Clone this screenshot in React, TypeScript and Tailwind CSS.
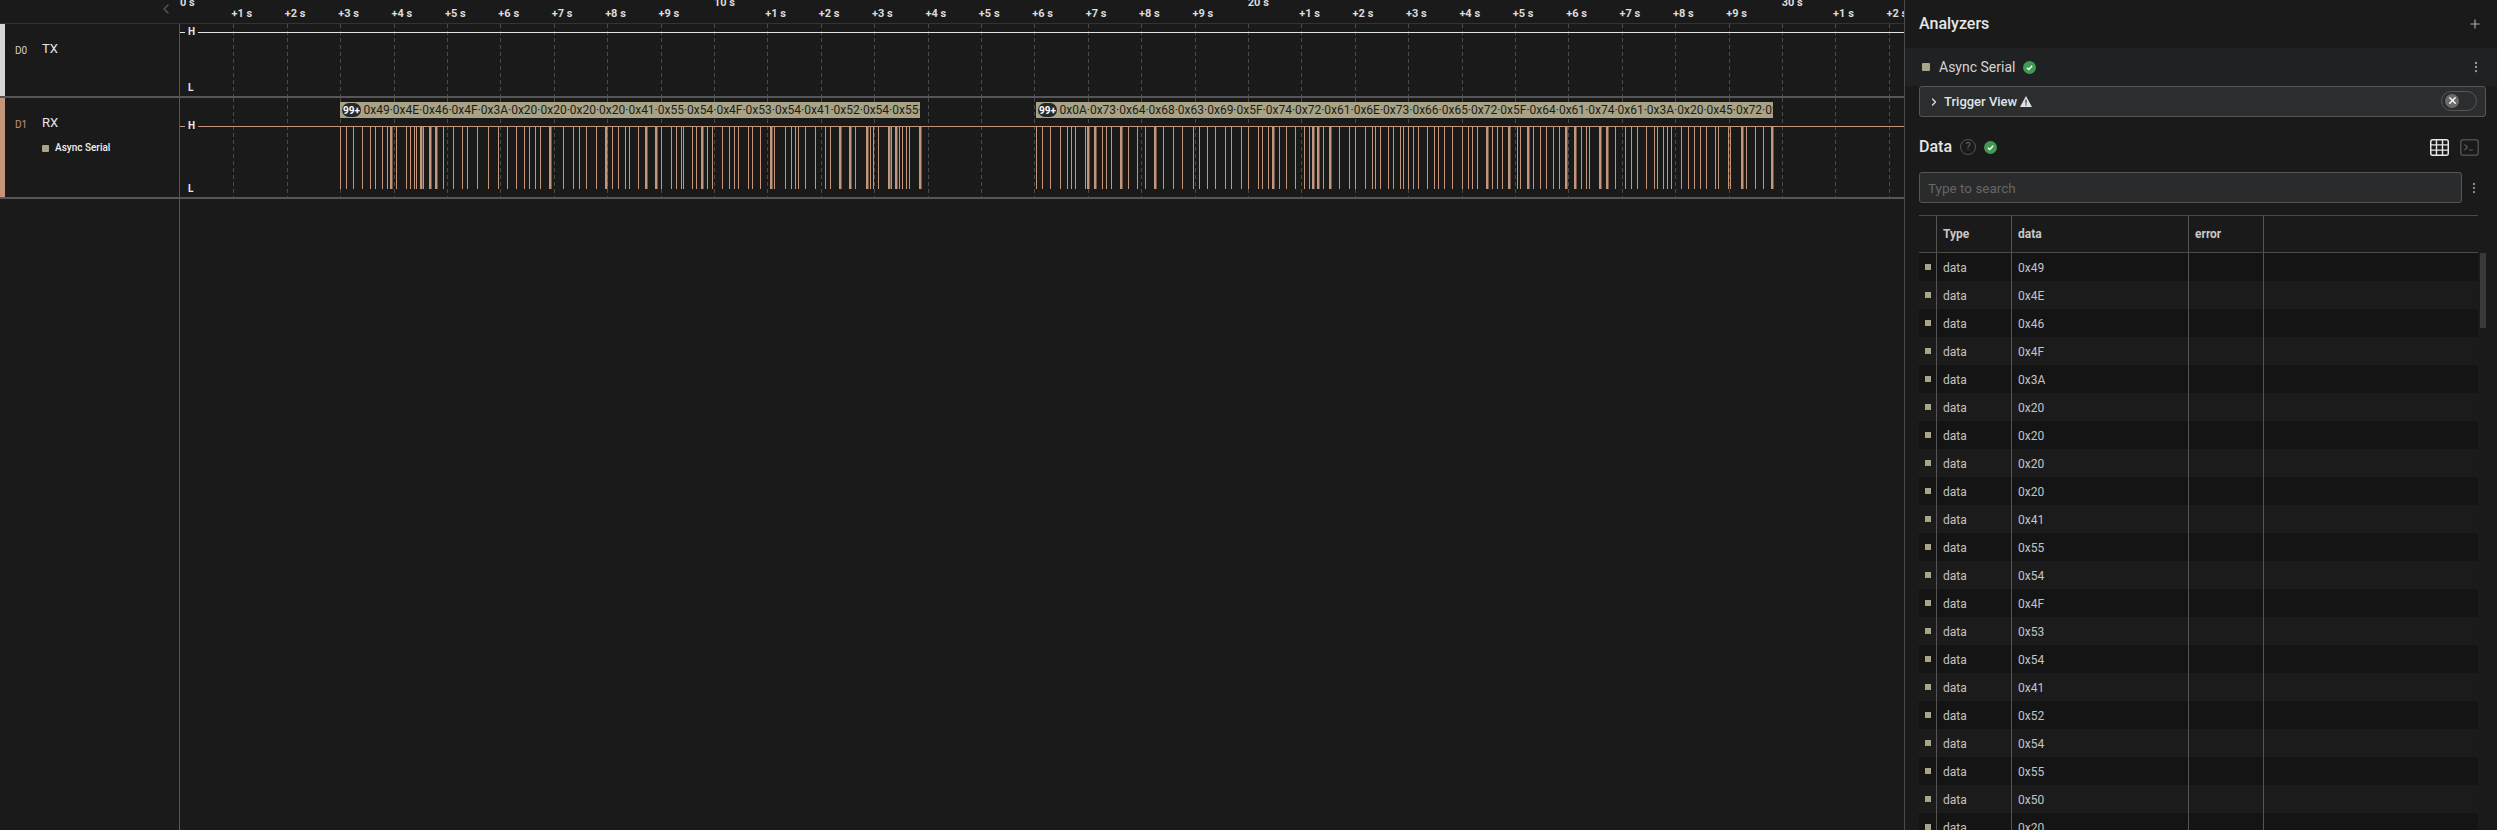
import React from "react";
import { Plus, MoreVertical, ChevronRight, ChevronLeft, X } from "lucide-react";

const STEP = 53.4;
const TICKS = Array.from({ length: 33 }, (_, i) => i);

// pulse positions: [crop origin, thin/thick values] thick values are negative
const groups: [number, number[]][] = [
  [320, [62,79,100,127,152,166,188,203,-211,228,260,271,282,288,-301,310,-329,-347,370,400,427,442,472,505,535,562,589,613,628,646,661,-689,730,760,778,799,829]],
  [600, [-17,37,55,76,88,115,-137,-167,184,214,229,245,250,277,289,-303,322,337,367,388,403,415,445,457,481,-512,523,556,574,586,595,616,646,676,691,-717,-747,766,-799,811,820,835,-866,874,-887,898,907,919,928,-958]],
  [1000, [108,127,151,181,202,214,226,255,-262,-282,307,319,334,-362,385,412,436,-462,490,520,547,580,598,622,646,676,694,724,745,775,787,805,-816,838,859,886]],
  [1300, [12,28,-37,-52,70,-89,118,148,166,196,217,226,241,265,280,301,310,326,340,355,382,403,415,433,457,487,505,517,532,-558,577,592,607,-625,652,661,-682,700,721,739,760,778,-796,-822,844,859,868,-899,-919,946,976,994,1012,1039,1063,1072,1090,1102,1114,1144,1165,1183,1201,1219,1246,1255,1285,1292,-1325,1339,1366,1390,-1415]],
];

const pulses = groups.flatMap(([o, vs]) =>
  vs.map((v) => ({ x: Math.floor(o + Math.abs(v) / 3 - 180), w: v < 0 ? 2.5 : 1 }))
);

const rows = ["0x49","0x4E","0x46","0x4F","0x3A","0x20","0x20","0x20","0x20","0x41","0x55","0x54","0x4F","0x53","0x54","0x41","0x52","0x54","0x55","0x50","0x20"];

function GridLines({ h }: { h: number }) {
  return (
    <>
      {TICKS.slice(1).map((k) => (
        <line key={k} x1={Math.round(k * STEP) + 0.5} x2={Math.round(k * STEP) + 0.5} y1={0} y2={h} stroke="#4a4a4a" strokeWidth={1} strokeDasharray="4 3" />
      ))}
    </>
  );
}

function Check({ size = 13 }: { size?: number }) {
  return (
    <svg width={size} height={size} viewBox="0 0 14 14" className="shrink-0">
      <circle cx="7" cy="7" r="7" fill="#3f9b52" />
      <path d="M4.2 7.2 L6.2 9.1 L9.9 5.2" fill="none" stroke="#fff" strokeWidth="1.5" />
    </svg>
  );
}

function Level({ label, className }: { label: string; className: string }) {
  return <span className={`absolute left-[5px] bg-[#1a1a1a] px-[3px] text-[10px] leading-[12px] font-bold text-[#e8e8e8] ${className}`}>{label}</span>;
}

function Decoded({ className, text }: { className: string; text: string }) {
  return (
    <div className={`absolute top-[4px] flex h-[16px] items-center overflow-hidden bg-[#a8a286] ${className}`}>
      <span className="ml-[2px] mr-[2.5px] flex h-[14px] w-[19px] shrink-0 items-center justify-center rounded-[7px] bg-[#26282b] text-[10px] font-bold text-white">99+</span>
      <span className="whitespace-nowrap text-[12px] leading-[16px] text-[#1c1c18]">{text}</span>
    </div>
  );
}

function Label({ id, name, idColor }: { id: string; name: string; idColor: string }) {
  return (
    <div className="flex items-center">
      <span className={`ml-[15px] mt-[3px] w-[27px] text-[10px] leading-[12px] ${idColor}`}>{id}</span>
      <span className="text-[13px] leading-[16px] text-[#e8e8e8]">{name}</span>
    </div>
  );
}

export default function App() {
  return (
    <div className="flex h-screen w-full overflow-hidden bg-[#1a1a1a] font-['Roboto',sans-serif] text-white">
      <main className="flex w-[1904px] shrink-0 flex-col">
        <header className="flex h-[24px] shrink-0 border-b border-[#333]">
          <div className="flex w-[178px] shrink-0 items-start justify-end pr-[4px] pt-[1px]">
            <ChevronLeft size={16} className="text-[#555]" strokeWidth={2} />
          </div>
          <div className="flex overflow-hidden">
            {TICKS.map((k) => {
              const major = k % 10 === 0;
              return (
                <span
                  key={k}
                  className={`w-[53.4px] shrink-0 whitespace-nowrap text-[11px] font-bold leading-[13px] text-[#dcdcdc] ${major ? "-mt-[4px] pl-[2px]" : "mt-[7px]"}`}
                >
                  {major ? `${k} s` : `+${k % 10} s`}
                </span>
              );
            })}
          </div>
        </header>

        <section className="flex h-[74px] shrink-0 border-b-2 border-[#565656]">
          <div className="flex w-[180px] shrink-0 border-r border-[#565656]">
            <div className="w-[5px] bg-[#d6d6d6]" />
            <div className="-ml-[5px] pt-[17px]">
              <Label id="D0" name="TX" idColor="text-[#d0d0d0]" />
            </div>
          </div>
          <div className="relative flex-1">
            <svg width="1724" height="72" className="block">
              <GridLines h={72} />
              <line x1="0" x2="1724" y1="8.5" y2="8.5" stroke="#e2e2e2" strokeWidth="1" />
            </svg>
            <Level label="H" className="top-[2px]" />
            <Level label="L" className="top-[58px]" />
          </div>
        </section>

        <section className="flex h-[101px] shrink-0 border-b-2 border-[#565656]">
          <div className="flex w-[180px] shrink-0 border-r border-[#565656]">
            <div className="w-[5px] bg-[#c3957a]" />
            <div className="-ml-[5px] flex flex-col pt-[17px]">
              <Label id="D1" name="RX" idColor="text-[#c3957a]" />
              <div className="ml-[42px] mt-[11px] flex items-center gap-[6px]">
                <span className="h-[7px] w-[7px] rounded-[1px] bg-[#aba588]" />
                <span className="text-[10px] font-medium leading-[12px] text-[#f0f0f0]">Async Serial</span>
              </div>
            </div>
          </div>
          <div className="relative flex-1">
            <svg width="1724" height="99" className="block">
              <GridLines h={99} />
              <line x1="0" x2="1724" y1="28.5" y2="28.5" stroke="#c3957a" strokeWidth="1" />
              {pulses.map((p, i) => (
                <rect key={i} x={p.x} y={28} width={p.w} height={63} fill="#c3957a" />
              ))}
            </svg>
            <Decoded className="left-[160px] w-[580px]" text="0x49·0x4E·0x46·0x4F·0x3A·0x20·0x20·0x20·0x20·0x41·0x55·0x54·0x4F·0x53·0x54·0x41·0x52·0x54·0x55·" />
            <Decoded className="left-[856px] w-[737px]" text="0x0A·0x73·0x64·0x68·0x63·0x69·0x5F·0x74·0x72·0x61·0x6E·0x73·0x66·0x65·0x72·0x5F·0x64·0x61·0x74·0x61·0x3A·0x20·0x45·0x72·0x72" />
            <Level label="H" className="top-[22px]" />
            <Level label="L" className="top-[85px]" />
          </div>
        </section>

        <div className="w-[180px] flex-1 border-r border-[#565656]" />
      </main>

      <aside className="flex min-w-0 flex-1 flex-col border-l border-[#4a4a4a]">
        <div className="flex h-[48px] shrink-0 items-center justify-between pl-[14px] pr-[15px]">
          <h2 className="text-[16px] font-medium leading-[20px] text-[#e6e6e6]">Analyzers</h2>
          <Plus size={14} className="text-[#a8a8a8]" strokeWidth={2} />
        </div>
        <div className="flex h-[38px] shrink-0 items-center bg-[#1f2123] pl-[17px] pr-[14px]">
          <span className="h-[8px] w-[8px] rounded-[1px] bg-[#aba588]" />
          <span className="ml-[9px] text-[14px] leading-[18px] text-[#d4d4d4]">Async Serial</span>
          <span className="ml-[8px]"><Check /></span>
          <MoreVertical size={14} className="ml-auto text-[#9a9a9a]" />
        </div>
        <div className="mx-[14px] flex h-[31px] w-[567px] shrink-0 items-center rounded-[3px] border border-[#555] bg-[#2c2d2f] pl-[8px] pr-[8px]">
          <ChevronRight size={12} className="text-[#e0e0e0]" strokeWidth={2.5} />
          <span className="ml-[4px] text-[13px] font-medium leading-[16px] text-[#dfe6ea]">Trigger View</span>
          <svg width="12" height="11" viewBox="0 0 12 11" className="ml-[3px]">
            <path d="M6 0 L12 11 L0 11 Z" fill="#e0e0e0" />
            <rect x="5.4" y="3.6" width="1.2" height="4" fill="#2c2d2f" />
            <rect x="5.4" y="8.4" width="1.2" height="1.2" fill="#2c2d2f" />
          </svg>
          <div className="ml-auto -mt-[2px] flex h-[20px] w-[36px] items-center rounded-full border border-[#555] pl-[3px]">
            <span className="flex h-[14px] w-[14px] items-center justify-center rounded-full bg-[#6a6a6a]">
              <X size={11} className="text-white" strokeWidth={3} />
            </span>
          </div>
        </div>

        <div className="mt-[20px] flex h-[20px] shrink-0 items-center pl-[14px] pr-[18px]">
          <h2 className="text-[16px] font-medium leading-[20px] text-[#e6e6e6]">Data</h2>
          <span className="ml-[8px] flex h-[16px] w-[16px] items-center justify-center rounded-full border border-[#555] text-[11px] text-[#666]">?</span>
          <span className="ml-[8px]"><Check /></span>
          <svg width="19" height="17" viewBox="0 0 19 17" className="ml-auto">
            <rect x="0.75" y="0.75" width="17.5" height="15.5" rx="2" fill="none" stroke="#e8e8e8" strokeWidth="1.5" />
            <path d="M6.5 1 V16 M12.5 1 V16 M1 5.9 H18 M1 11.1 H18" stroke="#e8e8e8" strokeWidth="1.4" />
          </svg>
          <svg width="19" height="17" viewBox="0 0 19 17" className="ml-[11px]">
            <rect x="0.75" y="0.75" width="17.5" height="15.5" rx="2.5" fill="none" stroke="#4c4c4c" strokeWidth="1.5" />
            <path d="M4.5 5.5 L7.5 8.2 L4.5 11 M9 11 H13" fill="none" stroke="#5a5a5a" strokeWidth="1.2" />
          </svg>
        </div>

        <div className="mt-[15px] flex shrink-0 items-center pl-[14px]">
          <div className="flex h-[31px] w-[543px] items-center rounded-[3px] border border-[#555] bg-[#2a2b2d] pl-[8px] pt-[1px] text-[13.5px] text-[#666]">
            Type to search
          </div>
          <MoreVertical size={14} className="ml-[5px] text-[#8c8c8c]" />
        </div>

        <div className="relative mt-[12px] ml-[14px] w-[559px] border-t border-[#4a4a4a] text-[12px]">
          <div className="flex h-[37px] items-center border-b border-[#4a4a4a] font-bold text-[#c8c8c8]">
            <div className="h-full w-[18px] border-r border-[#555]" />
            <div className="flex h-full w-[75px] items-center border-r border-[#555] pl-[6px]">Type</div>
            <div className="flex h-full w-[177px] items-center border-r border-[#555] pl-[6px]">data</div>
            <div className="flex h-full w-[75px] items-center border-r border-[#555] pl-[6px]">error</div>
          </div>
          {rows.map((r, i) => (
            <div key={i} className={`flex h-[28px] items-center text-[#c4c4c4] ${i % 2 === 0 ? "bg-[#141414]" : "bg-[#1b1b1b]"}`}>
              <div className="flex h-full w-[18px] items-center border-r border-[#555] pl-[6px]">
                <span className="h-[6px] w-[6px] bg-[#aba588]" />
              </div>
              <div className="flex h-full w-[75px] items-center border-r border-[#555] pl-[6px] pt-[1px]">data</div>
              <div className="flex h-full w-[177px] items-center border-r border-[#555] pl-[6px] pt-[1px]">{r}</div>
              <div className="h-full w-[75px] border-r border-[#555]" />
            </div>
          ))}
          <div className="absolute right-[-8px] top-[37px] h-[75px] w-[6px] bg-[#3a3a3a]" />
        </div>
      </aside>
    </div>
  );
}
